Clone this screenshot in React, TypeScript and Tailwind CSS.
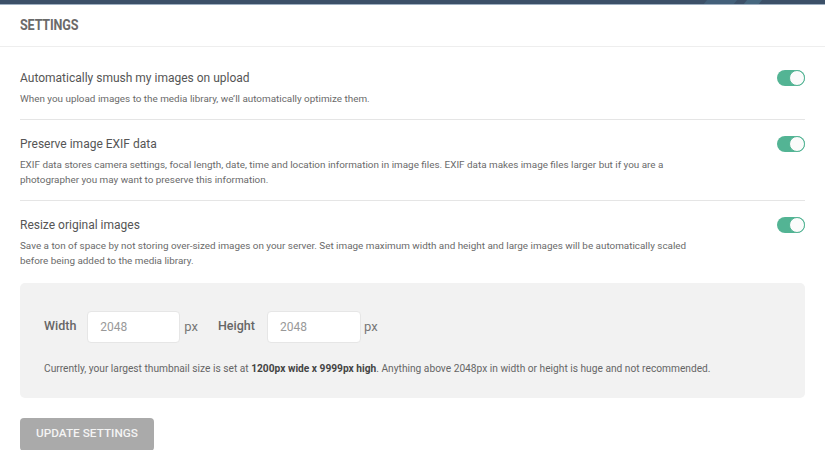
import React from "react";

function Toggle() {
  return (
    <div className="relative h-[16px] w-[28px] shrink-0 rounded-full bg-[#53b494]">
      <div className="absolute right-0 top-0 h-[16px] w-[16px] rounded-full border border-[#53b494] bg-[#fbfbfb]" />
    </div>
  );
}

function Row({
  title,
  desc,
  last,
}: {
  title: string;
  desc: React.ReactNode;
  last?: boolean;
}) {
  return (
    <div className={`flex items-start justify-between pt-[14px] ${last ? "" : "border-b border-[#e5e5e5] pb-[12px]"}`}>
      <div className="flex flex-col gap-[3px]">
        <div className="text-[12px] leading-[20px] text-[#555]">{title}</div>
        <div className="max-w-[680px] text-[9.9px] leading-[15.5px] text-[#6a6a6a]">{desc}</div>
      </div>
      <div className="pt-[2px]">
        <Toggle />
      </div>
    </div>
  );
}

export default function App() {
  return (
    <div
      className="h-[450px] w-[825px] overflow-hidden bg-white"
      style={{ fontFamily: "Roboto, 'Open Sans', sans-serif" }}
    >
      <div className="relative h-[5px] overflow-hidden border-b border-[#9fb0c2] bg-[#3c5068]">
        <div className="absolute left-[705px] top-0 h-[5px] w-[30px] -skew-x-[40deg] bg-[#43607a]" />
        <div className="absolute left-[745px] top-0 h-[5px] w-[15px] -skew-x-[40deg] bg-[#46677f]" />
      </div>
      <div className="flex h-[42px] items-center border-b border-[#eeeeee] px-5">
        <div className="origin-left scale-x-[0.84] text-[15px] font-bold tracking-[-0.2px] text-[#6a6a6a]">
          SETTINGS
        </div>
      </div>
      <div className="px-5 pt-[7px]">
        <Row
          title="Automatically smush my images on upload"
          desc="When you upload images to the media library, we’ll automatically optimize them."
        />
        <Row
          title="Preserve image EXIF data"
          desc="EXIF data stores camera settings, focal length, date, time and location information in image files. EXIF data makes image files larger but if you are a photographer you may want to preserve this information."
        />
        <Row
          title="Resize original images"
          desc="Save a ton of space by not storing over-sized images on your server. Set image maximum width and height and large images will be automatically scaled before being added to the media library."
          last
        />
        <div className="mt-[14px] rounded-[5px] bg-[#f2f2f2] px-6 pb-[22px] pt-[28px]">
          <div className="flex items-center">
            <span className="text-[12.5px] font-medium text-[#666]">Width</span>
            <input
              readOnly
              placeholder="2048"
              className="ml-[11px] h-[32px] w-[93px] rounded-[4px] border border-[#e6e6e6] bg-white pl-[12px] text-[12px] text-[#888] placeholder:text-[#999] outline-none"
            />
            <span className="ml-[4px] text-[13px] text-[#777]">px</span>
            <span className="ml-[20px] text-[12.5px] font-medium text-[#666]">Height</span>
            <input
              readOnly
              placeholder="2048"
              className="ml-[12px] h-[32px] w-[94px] rounded-[4px] border border-[#e6e6e6] bg-white pl-[12px] text-[12px] text-[#888] placeholder:text-[#999] outline-none"
            />
            <span className="ml-[3px] text-[13px] text-[#777]">px</span>
          </div>
          <div className="mt-[18px] text-[10.2px] leading-[15px] text-[#666]">
            Currently, your largest thumbnail size is set at{" "}
            <strong className="font-bold text-[#444]">1200px wide x 9999px high</strong>. Anything above 2048px
            in width or height is huge and not recommended.
          </div>
        </div>
        <button className="mt-[20px] h-[33px] w-[134px] rounded-[4px] bg-[#aaaaaa] text-[11.8px] font-medium text-[#f4f4f4]">
          UPDATE SETTINGS
        </button>
      </div>
    </div>
  );
}
